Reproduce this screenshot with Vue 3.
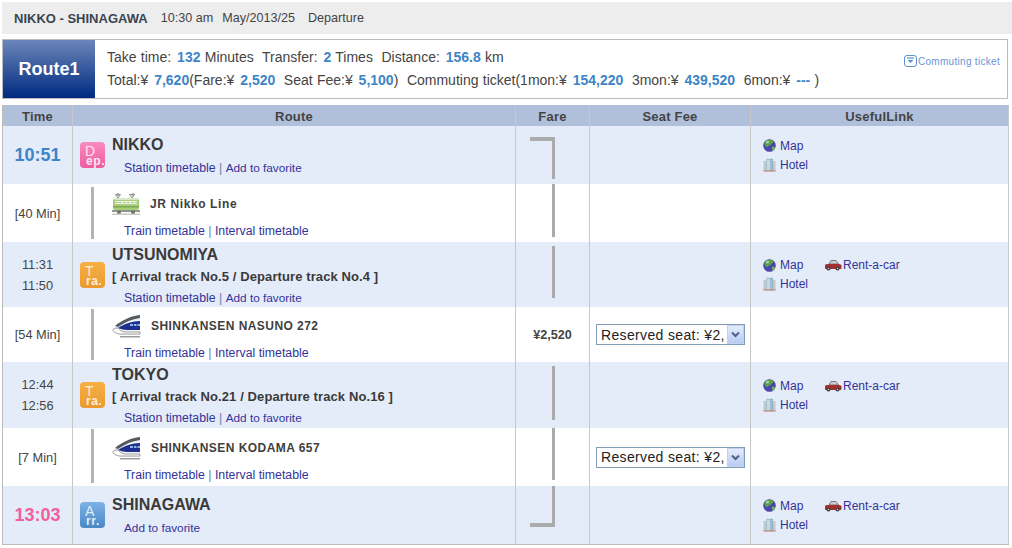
<script setup>
const rows = [
  { type: 'stn', time: '10:51', timeCls: 'dep', badge: 'dep', big: 'D', small: 'ep.', name: 'NIKKO', links: ['Station timetable', 'Add to favorite'], h: 58, rail: { kind: 'top', top: 11, bottom: 5 }, useful: 'short' },
  { type: 'seg', mins: '[40 Min]', icon: 'local', name: 'JR Nikko Line', links: ['Train timetable', 'Interval timetable'], h: 58, railT: 3, railB: 3, lineT: 8, linkB: 3, rail: { kind: 'mid', top: 0, bottom: 5 } },
  { type: 'stn', times: ['11:31', '11:50'], badge: 'tra', big: 'T', small: 'ra.', name: 'UTSUNOMIYA', track: '[ Arrival track No.5 / Departure track No.4 ]', links: ['Station timetable', 'Add to favorite'], h: 65, rail: { kind: 'mid', top: 4, bottom: 9 }, useful: 'full' },
  { type: 'seg', mins: '[54 Min]', icon: 'bullet', name: 'SHINKANSEN NASUNO 272', links: ['Train timetable', 'Interval timetable'], h: 55, railT: 2, railB: 2, lineT: 8, linkB: 1, fare: '¥2,520', seat: true },
  { type: 'stn', times: ['12:44', '12:56'], badge: 'tra', big: 'T', small: 'ra.', name: 'TOKYO', track: '[ Arrival track No.21 / Departure track No.16 ]', links: ['Station timetable', 'Add to favorite'], h: 66, rail: { kind: 'mid', top: 4, bottom: 8 }, useful: 'full' },
  { type: 'seg', mins: '[7 Min]', icon: 'bullet', name: 'SHINKANSEN KODAMA 657', links: ['Train timetable', 'Interval timetable'], h: 58, railT: 1, railB: 3, lineT: 9, linkB: 3, rail: { kind: 'mid', top: 0, bottom: 6 }, seat: true },
  { type: 'stn', time: '13:03', timeCls: 'arr', badge: 'arr', big: 'A', small: 'rr.', name: 'SHINAGAWA', links: ['Add to favorite'], h: 58, rail: { kind: 'bottom', top: 0, bottom: 17 }, useful: 'full' }
]
</script>

<template>
  <div class="page">
    <div class="search">
      <b>NIKKO - SHINAGAWA</b><span class="s-time">10:30 am</span><span class="s-date">May/2013/25</span><span class="s-dir">Departure</span>
    </div>

    <div class="summary">
      <div class="route-tag">Route1</div>
      <div class="facts">
        <p>Take time: <b>132</b> Minutes&nbsp; Transfer: <b>2</b> Times&nbsp; Distance: <b>156.8</b> km</p>
        <p>Total:¥ <b>7,620</b>(Fare:¥ <b>2,520</b>&nbsp; Seat Fee:¥ <b>5,100</b>)&nbsp; Commuting ticket(1mon:¥ <b>154,220</b>&nbsp; 3mon:¥ <b>439,520</b>&nbsp; 6mon:¥ <b>---</b> )</p>
      </div>
      <a class="commute">
        <svg width="13" height="12" viewBox="0 0 13 12"><rect x="0.5" y="0.5" width="12" height="11" rx="2.5" fill="#fff" stroke="#5b93cf"/><path d="M3 3h7" stroke="#5b93cf" stroke-width="1.2"/><path d="M3.5 5h6l-3 3z" fill="#5b93cf"/></svg>
        <span>Commuting ticket</span>
      </a>
    </div>

    <div class="table">
      <div class="row head">
        <div class="cell c-time">Time</div>
        <div class="cell c-route">Route</div>
        <div class="cell c-fare">Fare</div>
        <div class="cell c-seat">Seat Fee</div>
        <div class="cell c-use">UsefulLink</div>
      </div>

      <div v-for="(r, i) in rows" :key="i" class="row" :class="r.type" :style="{ height: r.h + 'px' }">
        <div class="cell c-time">
          <template v-if="r.type === 'stn'">
            <strong v-if="r.time" class="big-time" :class="r.timeCls">{{ r.time }}</strong>
            <template v-else>
              <span v-for="t in r.times" :key="t" class="small-time">{{ t }}</span>
            </template>
          </template>
          <span v-else class="mins">{{ r.mins }}</span>
        </div>

        <div class="cell c-route">
          <template v-if="r.type === 'stn'">
            <div class="badge" :class="r.badge"><i>{{ r.big }}</i><em>{{ r.small }}</em></div>
            <div class="stn-text" :class="{ tall: r.track }">
              <div class="stn-name">{{ r.name }}</div>
              <div v-if="r.track" class="track">{{ r.track }}</div>
              <div class="links">
                <template v-for="(l, k) in r.links" :key="l"><span v-if="k" class="sep"> | </span><a :class="{ fav: l === 'Add to favorite' }">{{ l }}</a></template>
              </div>
            </div>
          </template>
          <template v-else>
            <div class="seg-rail" :style="{ marginTop: r.railT + 'px', marginBottom: r.railB + 'px' }"></div>
            <div class="seg-text">
              <div class="line-row" :class="r.icon" :style="{ marginTop: r.lineT + 'px' }">
                <svg v-if="r.icon === 'local'" class="train" width="28" height="23" viewBox="0 0 28 23">
                  <path d="M6 6 3.5 2.5h5zM20 6l-2.500-3.500h5z" fill="none" stroke="#8a9088" stroke-width="1"/>
                  <circle cx="6" cy="2.500" r="1.500" fill="#9a9f98"/><circle cx="21" cy="2.500" r="1.500" fill="#9a9f98"/>
                  <rect x="1" y="6" width="26" height="12" rx="2" fill="#a6cf78"/>
                  <rect x="1" y="6" width="26" height="2" rx="1" fill="#d9e8c4"/>
                  <rect x="3" y="9" width="22" height="3" fill="#f2f7e8"/>
                  <path d="M3 10.500h22" stroke="#8db65f" stroke-width="0.700" stroke-dasharray="3 1"/>
                  <rect x="1" y="14" width="26" height="1.500" fill="#7ea551"/>
                  <rect x="0" y="18" width="28" height="2" fill="#8f958c"/>
                  <circle cx="7" cy="20.500" r="2" fill="#6b6f68"/><circle cx="21" cy="20.500" r="2" fill="#6b6f68"/>
                  <rect x="0" y="21.500" width="28" height="1.500" fill="#c9ccc6"/>
                </svg>
                <svg v-else class="train" width="29" height="23" viewBox="0 0 29 23">
                  <path d="M28 0C18 1 8 6 1 13c-1 2 0 4 2 5l6 2h19z" fill="#f2f3f5"/>
                  <path d="M28 0C19 1 10 5 3 11l3 1C13 7 20 4 28 3z" fill="#555a5e"/>
                  <path d="M28 6C20 6 12 9 6 13c3 1 6 2 9 2h13z" fill="#1d2f8f"/>
                  <path d="M18 9h3v2h-3zM22 9h2.500v2H22zM25.500 9H28v2h-2.500z" fill="#8fb7e8"/>
                  <path d="M6 13C3 13 1 14 1 15c0 2 3 3 6 4h21v-2H13c-3 0-5-2-7-4z" fill="#fff" stroke="#666" stroke-width="0.600"/>
                  <rect x="8" y="21" width="20" height="1.500" fill="#9a9d9f"/>
                </svg>
                <span>{{ r.name }}</span>
              </div>
              <div class="links" :style="{ marginBottom: r.linkB + 'px' }">
                <template v-for="(l, k) in r.links" :key="l"><span v-if="k" class="sep"> | </span><a>{{ l }}</a></template>
              </div>
            </div>
          </template>
        </div>

        <div class="cell c-fare">
          <span v-if="r.fare" class="fare-val">{{ r.fare }}</span>
          <div v-else-if="r.rail" class="rail" :class="r.rail.kind" :style="{ marginTop: r.rail.top + 'px', marginBottom: r.rail.bottom + 'px' }"></div>
        </div>

        <div class="cell c-seat">
          <div v-if="r.seat" class="select-wrap">
            <select>
              <option>Reserved seat: ¥2,520</option>
            </select>
            <span class="sel-btn">
              <svg width="9" height="7" viewBox="0 0 9 7"><path d="M1 1.500 4.500 5 8 1.500" fill="none" stroke="#4d6185" stroke-width="2"/></svg>
            </span>
          </div>
        </div>

        <div class="cell c-use">
          <div v-if="r.useful" class="use-grid">
            <a class="use-link">
              <svg width="13" height="13" viewBox="0 0 13 13">
                <circle cx="6.500" cy="6.500" r="6.300" fill="#4f44ad"/>
                <path d="M2 2.500C4 .5 8 0 10 1.500c1 1 .5 2.500-1 3-1 .5-1 2-2.500 2-1.500.5-2 2-3 1.500C2 7 .5 4.500 2 2.500z" fill="#5aa04a"/>
                <path d="M9 8c1.500-.5 3 0 3 .8-.5 1.500-1.500 2.500-2.500 2.700C9 10.500 8.500 9 9 8z" fill="#6fb35c"/>
                <circle cx="4.500" cy="3" r="1.500" fill="#a9d69a"/>
              </svg>
              <span>Map</span>
            </a>
            <a v-if="r.useful === 'full'" class="use-link car">
              <svg width="18" height="12" viewBox="0 0 18 12">
                <path d="M5 5 7 1.500h5L14.500 5z" fill="#c6ced6" stroke="#6d5a5a" stroke-width="0.800"/>
                <path d="M1 9V6.500C1 5.500 2 5 4 5h10c2 0 3.500.5 3.500 1.500V9c0 .5-.5 1-1 1H2c-.5 0-1-.5-1-1z" fill="#a3302f"/>
                <circle cx="4.500" cy="9.500" r="2.100" fill="#3d3d3d"/><circle cx="13.500" cy="9.500" r="2.100" fill="#3d3d3d"/>
                <circle cx="4.500" cy="9.500" r="0.800" fill="#ccc"/><circle cx="13.500" cy="9.500" r="0.800" fill="#ccc"/>
              </svg>
              <span>Rent-a-car</span>
            </a>
            <a class="use-link hotel">
              <svg width="13" height="14" viewBox="0 0 13 14">
                <rect x="0.500" y="3" width="12" height="10.500" fill="#c9c5c0"/>
                <rect x="3" y="0.800" width="7" height="12.700" fill="#a5c4d6"/>
                <path d="M4 3h5M4 5h5M4 7h5M4 9h5M4 11h5" stroke="#e2eff6" stroke-width="1"/>
                <path d="M7 .8h3v12.700H7z" fill="#7fa6bd" opacity=".55"/>
                <rect x="0.500" y="12" width="12" height="1.500" fill="#c79a8d"/>
              </svg>
              <span>Hotel</span>
            </a>
          </div>
        </div>
      </div>
    </div>
  </div>
</template>

<style>
html, body { margin: 0; background: #fff; }
</style>

<style scoped>
.page {
  width: 1012px;
  height: 548px;
  overflow: hidden;
  padding-top: 2px;
  box-sizing: border-box;
  font-family: "Liberation Sans", Arial, sans-serif;
  font-size: 12px;
  color: #444;
}
.search {
  margin-left: 2px;
  height: 32px;
  background: #ededed;
  display: flex;
  align-items: center;
  padding-left: 12px;
  font-size: 12.6px;
  color: #444;
}
.search b { font-size: 13px; color: #3b4550; }
.s-time { margin-left: 13px; }
.s-date { margin-left: 9px; }
.s-dir { margin-left: 13px; }

.summary {
  margin: 5px 4px 0 2px;
  height: 60px;
  box-sizing: border-box;
  border: 1px solid #bbb;
  display: flex;
  position: relative;
}
.route-tag {
  width: 92px;
  background: linear-gradient(#6b86ba, #002a80);
  color: #fff;
  font-size: 18px;
  font-weight: bold;
  display: flex;
  align-items: center;
  justify-content: center;
}
.facts { padding: 6px 0 0 12px; font-size: 14px; color: #444; word-spacing: 0.4px; }
.facts p { margin: 0; line-height: 23px; white-space: nowrap; }
.facts b { color: #3d85c6; margin-left: 1.6px; }
.commute {
  position: absolute;
  right: 7px;
  top: 15px;
  display: flex;
  align-items: center;
  gap: 1px;
  font-size: 10px;
  letter-spacing: 0.3px;
  color: #6c93d4;
}

.table {
  margin: 6px 3px 0 2px;
  border-left: 1px solid #bbb;
  border-bottom: 1px solid #bbb;
}
.row { display: flex; background: #fff; }
.row.stn { background: #e5ecf9; }
.row.head {
  height: 21px;
  background: #b0c0db;
  font-weight: bold;
  font-size: 13px;
  letter-spacing: 0.2px;
  color: #444;
}
.row.head .cell { justify-content: center; align-items: center; line-height: 1; padding: 1px 0 0; box-sizing: border-box; }
.cell { display: flex; box-sizing: border-box; border-right: 1px solid #c8c8c8; }
.c-time { width: 70px; flex-direction: column; align-items: center; justify-content: center; }
.c-route { width: 443px; }
.c-fare { width: 74px; }
.c-seat { width: 161px; }
.c-use { flex: 1; border-right: 1px solid #c8c8c8; }

.big-time { font-size: 18px; }
.big-time.dep { color: #3d85c6; }
.big-time.arr { color: #f0609f; }
.small-time { line-height: 21px; font-size: 12.8px; }
.mins { color: #444; font-size: 12.8px; }

.stn .c-route { align-items: center; padding-left: 7px; }
.badge {
  width: 25px;
  height: 26px;
  border-radius: 4px;
  flex: none;
  box-sizing: border-box;
  padding: 3px 0 0 5px;
  display: flex;
  flex-direction: column;
}
.badge i, .badge em { font-style: normal; display: block; }
.badge i { font-size: 14px; line-height: 12px; color: rgba(255, 255, 255, 0.8); }
.badge em { font-size: 12px; line-height: 9px; font-weight: bold; letter-spacing: 0.6px; padding-left: 1px; color: rgba(255, 255, 255, 0.85); }
.badge.dep { background: linear-gradient(#f98cc0, #ee5c9e); }
.badge.tra { background: linear-gradient(#f6b044, #eb9a2f); }
.badge.arr { background: linear-gradient(#7db2e6, #4a88c6); }

.stn-text { margin-left: 7px; align-self: stretch; display: flex; flex-direction: column; padding-top: 9px; }
.stn-text.tall { padding-top: 3px; }
.stn-name { font-size: 16px; font-weight: bold; line-height: 20px; color: #3a3a3a; }
.track { font-size: 13px; font-weight: bold; line-height: 20px; margin-top: 2px; letter-spacing: 0.1px; color: #3a3a3a; }
.links { padding-left: 12px; line-height: 16px; margin-top: 5px; font-size: 12.3px; white-space: pre; }
.links a { color: #33339a; }
.links a.fav { font-size: 11.8px; }
.sep { color: #6c7fb0; }
.tall .links { margin-top: 3px; }

.seg-rail { width: 3px; margin-left: 18px; background: #b3b3b3; flex: none; }
.seg-text { margin-left: 18px; display: flex; flex-direction: column; flex: 1; }
.line-row { display: flex; align-items: center; font-weight: bold; height: 23px; color: #3f3f3f; }
.line-row.local span { margin-left: 10px; letter-spacing: 0.6px; }
.line-row.bullet span { margin: -2px 0 0 10px; letter-spacing: 0.45px; }
.train { flex: none; }
.seg .links { margin-top: auto; }

.stn .c-fare, .seg .c-fare { padding-left: 14px; }
.rail { background: #ababab; flex: none; width: 3px; margin-left: 22px; }
.rail.top, .rail.bottom { width: 25px; margin-left: 0; background: none; border-right: 3px solid #ababab; box-sizing: border-box; }
.rail.top { border-top: 4px solid #ababab; }
.rail.bottom { border-bottom: 4px solid #ababab; }
.seg .c-fare:has(.fare-val) { padding-left: 0; justify-content: center; align-items: center; }
.fare-val { font-weight: bold; font-size: 12.6px; color: #444; }

.c-seat { align-items: center; padding-left: 6px; }
.select-wrap { position: relative; width: 149px; height: 21px; }
.select-wrap select {
  appearance: none;
  width: 100%;
  height: 100%;
  box-sizing: border-box;
  border: 1px solid #7f9db9;
  border-radius: 0;
  background: #fff;
  padding: 0 20px 0 4px;
  font: 14px "Liberation Sans", Arial, sans-serif;
  color: #222;
  letter-spacing: 0.35px;
}
.sel-btn {
  position: absolute;
  right: 1px;
  top: 1px;
  bottom: 1px;
  width: 17px;
  background: linear-gradient(#e4ebfc, #b9ccf4);
  border: 1px solid #c3d1ee;
  box-sizing: border-box;
  display: flex;
  align-items: center;
  justify-content: center;
}

.c-use { align-items: center; padding-left: 12px; }
.use-grid { display: grid; grid-template-columns: 61px auto; row-gap: 3px; }
.use-link { display: flex; align-items: center; height: 16px; gap: 4px; color: #33339a; grid-column: 1; }
.use-link.car { grid-column: 2; gap: 1px; }
.use-link.hotel { grid-column: 1; grid-row: 2; }
</style>
